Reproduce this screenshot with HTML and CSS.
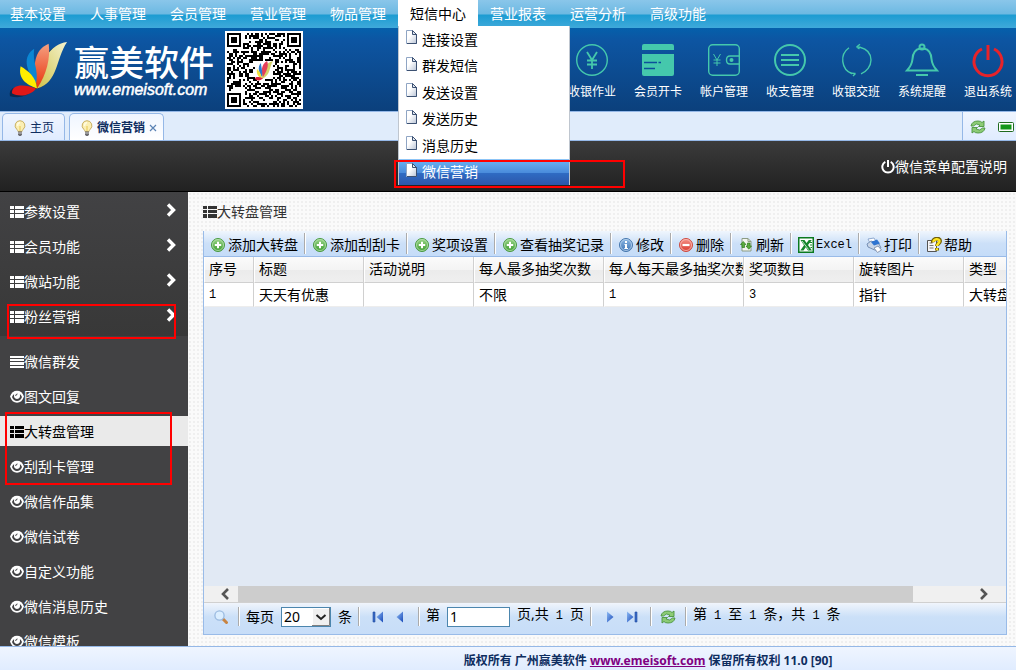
FILE: index.html
```html
<!DOCTYPE html>
<html lang="zh-CN">
<head>
<meta charset="utf-8">
<title>赢美软件</title>
<link rel="stylesheet" href="styles.css">
</head>
<body>
<svg class="defs" aria-hidden="true">
  <defs>
    <linearGradient id="gGreen" x1="0" y1="0" x2="0" y2="1"><stop offset="0" stop-color="#9ad588"/><stop offset="1" stop-color="#3c9c30"/></linearGradient>
    <linearGradient id="gBlue" x1="0" y1="0" x2="0" y2="1"><stop offset="0" stop-color="#8db8e4"/><stop offset="1" stop-color="#3e74b4"/></linearGradient>
    <linearGradient id="gRed" x1="0" y1="0" x2="0" y2="1"><stop offset="0" stop-color="#f6948a"/><stop offset="1" stop-color="#d8392e"/></linearGradient>
    <linearGradient id="gNav" x1="0" y1="0" x2="1" y2="1"><stop offset="0" stop-color="#8fbcf5"/><stop offset="1" stop-color="#1748b8"/></linearGradient>
    <linearGradient id="gPage" x1="0" y1="0" x2="1" y2="1"><stop offset="0.4" stop-color="#fff"/><stop offset="1" stop-color="#b9c4d6"/></linearGradient>
    <linearGradient id="gL1" x1="1" y1="0" x2="0" y2="1"><stop offset="0" stop-color="#f5f3cf"/><stop offset="1" stop-color="#cfc24a"/></linearGradient>
    <linearGradient id="gL2" x1="0" y1="0" x2="0" y2="1"><stop offset="0" stop-color="#f5a080"/><stop offset="1" stop-color="#e8320c"/></linearGradient>
  </defs>
  <symbol id="list" viewBox="0 0 14 14"><path d="M0 1h4v3H0zM5 1h9v3H5zM0 5h4v3H0zM5 5h9v3H5zM0 9h4v4H0zM5 9h9v4H5z" fill="currentColor"/></symbol>
  <symbol id="bars" viewBox="0 0 14 14"><path d="M0 1h14v2H0zM0 4h14v2H0zM0 7h14v3H0zM0 11h14v2H0z" fill="currentColor"/></symbol>
  <symbol id="eye" viewBox="0 0 14 14"><path d="M0 6.500Q2 .8 7 .8T14 6.500Q12 12.700 7 12.700T0 6.500z" fill="currentColor"/><path d="M2 7Q3 4.500 4.300 4Q3.400 8.800 7 9Q10.600 8.800 9.700 4Q11 4.500 12 7Q10.500 11 7 11T2 7z" fill="#424244"/><circle cx="7" cy="5.400" r="2.800" fill="currentColor"/><path d="M5.700 6q0-2 1.800-2" stroke="#424244" fill="none"/></symbol>
  <symbol id="chev" viewBox="0 0 10 14"><path d="M2 1.500L7.500 7L2 12.500" fill="none" stroke="currentColor" stroke-width="3.400"/></symbol>
  <symbol id="power" viewBox="0 0 14 14"><path d="M4.300 1.900A5.700 5.700 0 1 0 9.700 1.900M7 0v7" fill="none" stroke="currentColor" stroke-width="2"/></symbol>
  <symbol id="page" viewBox="0 0 11 14"><path d="M.5.5h6l4 4v9H.5z" fill="url(#gPage)" stroke="#8fa5c4"/><path d="M10.500 4v9.500H1" fill="none" stroke="#3c5172"/><path d="M6.500.5v4h4z" fill="#dfe6f0" stroke="#3c5172"/></symbol>
  <symbol id="bulb" viewBox="0 0 12 16"><path d="M6 .7a4.900 4.900 0 0 0-3.200 8.600q1 1 1.200 2.200h4q.2-1.200 1.200-2.200A4.900 4.900 0 0 0 6 .7z" fill="#fbefb4" stroke="#c9b064"/><path d="M3.500 6q0-3 2.500-3.500" stroke="#fffbe0" stroke-width="1.500" fill="none"/><path d="M6 6v5" stroke="#e8c74e"/><path d="M4 11.500h4v3L7 16H5l-1-1.500z" fill="#6c6c70"/><path d="M4 13h4" stroke="#c8c8c8"/></symbol>
  <symbol id="add" viewBox="0 0 16 16"><circle cx="8" cy="8" r="6.500" fill="url(#gGreen)" stroke="#4a9a42"/><circle cx="8" cy="8" r="5.500" fill="none" stroke="#b9e2b0" stroke-width=".8"/><path d="M8 4.800v6.400M4.800 8h6.400" stroke="#fff" stroke-width="2"/></symbol>
  <symbol id="info" viewBox="0 0 16 16"><circle cx="8" cy="8" r="6.500" fill="url(#gBlue)" stroke="#4577ad"/><circle cx="8" cy="8" r="5.500" fill="none" stroke="#bcd5ef" stroke-width=".8"/><path d="M7 4h2v2H7zM6.500 7H9v4h1v1H6.300v-1H7V8h-.5z" fill="#fff"/></symbol>
  <symbol id="del" viewBox="0 0 16 16"><circle cx="8" cy="8" r="6.500" fill="url(#gRed)" stroke="#cd4a40"/><circle cx="8" cy="8" r="5.500" fill="none" stroke="#fbc1bb" stroke-width=".8"/><path d="M4.500 8h7" stroke="#fff" stroke-width="2.200"/></symbol>
  <symbol id="reload" viewBox="0 0 16 16"><path d="M4 1.500h6l3 3v9.500H4z" fill="#f2f5ee" stroke="#8b9b83"/><path d="M10 1.500v3h3" fill="none" stroke="#8b9b83"/><path d="M4 10.500V7.500H2.500L5.200 4.500 8 7.500H6.500v3zM9.500 6H12v3h1.500l-2.700 3.200L8 9h1.500z" fill="#5bab3d" stroke="#2d7c1c" stroke-width=".7"/></symbol>
  <symbol id="xls" viewBox="0 0 16 16"><path d="M0 0h16v16H0z" fill="#0b7a20"/><path d="M1.500 1.500h13v13h-13z" fill="#fff"/><path d="M2.500 3h4l2 3 2.300-3h3L10 8l4 5.500h-4L7.700 10.200 5.500 13.500H2.300L6 8.300z" fill="#16862b"/><path d="M11 5.500h3M12 8h2M12.500 10.500H14" stroke="#16862b"/><path d="M4 4l6.500 8.500" stroke="#bfe3c6"/></symbol>
  <symbol id="print" viewBox="0 0 16 16"><path d="M2 2l6-1 3 5-6 2z" fill="#fff" stroke="#8fa9cf"/><path d="M1 7l4-3 8 3 2 4-4 3-9-4z" fill="#c9d6e8" stroke="#7690b5"/><path d="M5 5l6-2.500 3 4-6 2z" fill="#2f74d0"/><path d="M8 11l4-2 3.500 4-4 2.500z" fill="#fff" stroke="#8998b0"/></symbol>
  <symbol id="help" viewBox="0 0 16 16"><path d="M1.500 3.500h9v11h-9z" fill="#f6f6f8" stroke="#555"/><path d="M3.500 6h3M3.500 8.500h4M3.500 11h4" stroke="#777"/><path d="M7 5.500C6 1.500 14 0 14 4c0 2.500-3 2.600-3 5M11 11v2.500" stroke="#71600a" stroke-width="4" fill="none"/><path d="M7.500 5C7 2 13.500 1 13.500 4c0 2.300-2.600 2.800-2.600 5M10.900 11.200v2" stroke="#ffe51f" stroke-width="2.400" fill="none"/></symbol>
  <symbol id="recycle" viewBox="0 0 16 16"><path d="M1 7q1-5 7-5 3 0 4 1.500L14 2v5.500H8.500L10 6Q6 3.500 3.500 7z" fill="#8ccb75" stroke="#4b9440" stroke-width=".9"/><path d="M15 9q-1 5-7 5-3 0-4-1.500L2 14V8.500h5.500L6 10q4 2.500 6.500-1z" fill="#8ccb75" stroke="#4b9440" stroke-width=".9"/></symbol>
  <symbol id="search" viewBox="0 0 16 16"><path d="M10 10l3.500 3.500" stroke="#c88442" stroke-width="3" stroke-linecap="round"/><circle cx="6.500" cy="6.500" r="4.600" fill="#dbeeff" stroke="#9bbbe0" stroke-width="1.300"/></symbol>
  <symbol id="first" viewBox="0 0 16 16"><path d="M3 3h2v10H3z" fill="#3a6cc8" stroke="#1f4ba0" stroke-width=".6"/><path d="M13 2.500v11L6.500 8z" fill="url(#gNav)"/></symbol>
  <symbol id="prev" viewBox="0 0 16 16"><path d="M11 2.500v11L4.500 8z" fill="url(#gNav)"/></symbol>
  <symbol id="next" viewBox="0 0 16 16"><path d="M5 2.500v11L11.500 8z" fill="url(#gNav)"/></symbol>
  <symbol id="last" viewBox="0 0 16 16"><path d="M11 3h2v10h-2z" fill="#3a6cc8" stroke="#1f4ba0" stroke-width=".6"/><path d="M3 2.500v11L9.500 8z" fill="url(#gNav)"/></symbol>
</svg>

<nav class="menu">
  <a href="#">基本设置</a><a href="#">人事管理</a><a href="#">会员管理</a><a href="#">营业管理</a><a href="#">物品管理</a>
  <div class="menu-open">
    <a href="#" class="current">短信中心</a>
    <div class="dropdown">
      <a href="#"><svg><use href="#page"/></svg>连接设置</a>
      <a href="#"><svg><use href="#page"/></svg>群发短信</a>
      <a href="#"><svg><use href="#page"/></svg>发送设置</a>
      <a href="#"><svg><use href="#page"/></svg>发送历史</a>
      <a href="#"><svg><use href="#page"/></svg>消息历史</a>
      <a href="#" class="hot"><svg><use href="#page"/></svg>微信营销<span class="mark mark-menu"></span></a>
    </div>
  </div>
  <a href="#">营业报表</a><a href="#">运营分析</a><a href="#">高级功能</a>
</nav>

<header class="banner">
  <svg class="logo" viewBox="0 0 62 62">
    <g opacity=".4" transform="translate(-2 2)"><path d="M58 3C42 4 26 24 28 49C46 47 50 24 58 3z"/><path d="M3 56Q1 46 15 46L28 49Q18 60 3 56z"/></g>
    <path d="M60 2C43 4 29 24 29 50C51 44 48 20 60 2z" fill="url(#gL1)"/>
    <path d="M41 4C24 11 25 30 29 50C39 36 43 18 41 4z" fill="url(#gL2)"/>
    <path d="M26 9C14 17 17 30 28 45C31 30 24 24 26 9z" fill="#0b86d3"/>
    <path d="M12 27C9 40 18 46 29 50C28 38 20 32 12 27z" fill="#ffed00"/>
    <path d="M3 55C3 45 16 46 28 50C22 58 10 59 3 55z" fill="#e01818"/>
  </svg>
  <div class="brand"><strong>赢美软件</strong><em>www.emeisoft.com</em></div>
  <svg class="qr" id="qr" viewBox="0 0 39 39" shape-rendering="crispEdges"></svg>
  <div class="shortcuts">
    <a href="#"><svg viewBox="0 0 32 32"><circle cx="16" cy="16" r="15.300"/><path d="M11 8l5 8 5-8M16 16v9M11 16.500h10M11 20.500h10" stroke-width="1.800"/></svg>收银作业</a>
    <a href="#"><svg viewBox="0 0 32 32"><path d="M2 0h28q2 0 2 2v4H0V2q0-2 2-2zM0 10h32v20q0 2-2 2H2q-2 0-2-2z" class="solid"/><path d="M2 18.500h13M16.500 18.500h2.500M2 24.500h11" stroke="#0c4f9b"/></svg>会员开卡</a>
    <a href="#"><svg viewBox="0 0 32 32"><rect x=".7" y=".7" width="30.600" height="30.600" rx="4"/><path d="M5.500 10l3.500 6 3.500-6M9 16v6M5.500 16h7M5.500 19h7" stroke-width="1"/><path d="M31 12H22q-3.500 0-3.500 4t3.500 4h9" /><circle cx="23.500" cy="16" r="2" class="solid"/></svg>帐户管理</a>
    <a href="#"><svg viewBox="0 0 32 32"><circle cx="16" cy="16" r="15" stroke-width="2"/><path d="M7 11h18M7 16h18M7 21h18" stroke-width="2"/></svg>收支管理</a>
    <a href="#"><svg viewBox="0 0 32 32"><path d="M12 29.800A15 15 0 0 1 9 3.700M21 29.800A15 15 0 0 0 31 16Q31 6 20 3.200L16.500 3M16.500 3L20 .3M16.500 3l3 1.800M9 28.200q3 1.500 6.500 1.300M15.500 29.500L13 32"/></svg>收银交班</a>
    <a href="#"><svg viewBox="0 0 32 32"><path d="M1 26.500h30Q26 21 25.500 15Q25 6 18 4.500h-4Q7 6 6.500 15Q6 21 1 26.500z" stroke-width="2"/><circle cx="16" cy="3" r="2.500" stroke-width="2"/><path d="M10 31h12" stroke-width="2"/></svg>系统提醒</a>
    <a href="#" class="quit"><svg viewBox="0 0 32 32"><path d="M10 5A14 14 0 1 0 22 5M16 1v15" stroke-width="3"/></svg>退出系统</a>
  </div>
</header>

<div class="tabs">
  <a href="#" class="tab"><svg><use href="#bulb"/></svg>主页</a>
  <div class="tab active"><svg><use href="#bulb"/></svg>微信营销<button class="close" type="button" aria-label="关闭"><svg viewBox="0 0 8 8"><path d="M1 1l6 6M7 1L1 7" stroke="#5a82b4" stroke-width="1.200"/></svg></button></div>
  <div class="tab-tools">
    <button type="button" aria-label="刷新"><svg><use href="#recycle"/></svg></button>
    <button type="button" aria-label="全屏"><svg viewBox="0 0 16 16"><rect x=".5" y="3.500" width="15" height="9" rx="1" fill="#fff" stroke="#1f6a1f"/><path d="M2.500 5.500h11v5h-11z" fill="#12961a"/></svg></button>
  </div>
</div>

<div class="topbar"><a href="#"><svg><use href="#power"/></svg>微信菜单配置说明</a></div>

<main class="main">
  <aside class="side">
    <div class="groups">
      <a href="#"><svg><use href="#list"/></svg>参数设置<svg class="chev"><use href="#chev"/></svg></a>
      <a href="#"><svg><use href="#list"/></svg>会员功能<svg class="chev"><use href="#chev"/></svg></a>
      <a href="#"><svg><use href="#list"/></svg>微站功能<svg class="chev"><use href="#chev"/></svg></a>
      <a href="#"><svg><use href="#list"/></svg>粉丝营销<svg class="chev"><use href="#chev"/></svg><span class="mark mark-group"></span></a>
    </div>
    <div class="sub">
      <a href="#"><svg><use href="#bars"/></svg>微信群发</a>
      <a href="#"><svg><use href="#eye"/></svg>图文回复</a>
      <a href="#" class="selected"><svg><use href="#list"/></svg>大转盘管理<span class="mark mark-sub"></span></a>
      <a href="#"><svg><use href="#eye"/></svg>刮刮卡管理</a>
      <a href="#"><svg><use href="#eye"/></svg>微信作品集</a>
      <a href="#"><svg><use href="#eye"/></svg>微信试卷</a>
      <a href="#"><svg><use href="#eye"/></svg>自定义功能</a>
      <a href="#"><svg><use href="#eye"/></svg>微信消息历史</a>
      <a href="#"><svg><use href="#eye"/></svg>微信模板</a>
    </div>
  </aside>
  <section class="content">
    <h1><svg><use href="#list"/></svg>大转盘管理</h1>
    <div class="panel">
      <div class="toolbar">
        <button type="button"><svg><use href="#add"/></svg>添加大转盘</button>
        <button type="button"><svg><use href="#add"/></svg>添加刮刮卡</button>
        <button type="button"><svg><use href="#add"/></svg>奖项设置</button>
        <button type="button"><svg><use href="#add"/></svg>查看抽奖记录</button>
        <button type="button"><svg><use href="#info"/></svg>修改</button>
        <button type="button"><svg><use href="#del"/></svg>删除</button>
        <button type="button"><svg><use href="#reload"/></svg>刷新</button>
        <button type="button"><svg><use href="#xls"/></svg><span class="mono">Excel</span></button>
        <button type="button"><svg><use href="#print"/></svg>打印</button>
        <button type="button"><svg><use href="#help"/></svg>帮助</button>
      </div>
      <div class="grid">
        <table>
          <colgroup><col class="w50"><col class="w110"><col class="w110"><col class="w130"><col class="w140"><col class="w110"><col class="w110"><col class="w110"></colgroup>
          <thead><tr><th>序号</th><th>标题</th><th>活动说明</th><th>每人最多抽奖次数</th><th>每人每天最多抽奖次数</th><th>奖项数目</th><th>旋转图片</th><th>类型</th></tr></thead>
          <tbody><tr><td class="mono">1</td><td>天天有优惠</td><td></td><td>不限</td><td class="mono">1</td><td class="mono">3</td><td>指针</td><td>大转盘</td></tr></tbody>
        </table>
      </div>
      <div class="hscroll">
        <button type="button" aria-label="向左"><svg viewBox="0 0 10 12"><path d="M8 1L3 6l5 5" fill="none" stroke="#555" stroke-width="2.600"/></svg></button>
        <div class="track"><div class="thumb"></div></div>
        <button type="button" aria-label="向右"><svg viewBox="0 0 10 12"><path d="M2 1l5 5-5 5" fill="none" stroke="#555" stroke-width="2.600"/></svg></button>
      </div>
      <div class="pager">
        <div class="cell"><button type="button" aria-label="查找"><svg><use href="#search"/></svg></button></div>
        <div class="cell"><label for="size">每页</label><span class="pick"><select id="size"><option>20</option></select><svg viewBox="0 0 18 18"><path d="M0 0h18v18H0z" fill="#f0f0f0"/><path d="M.5 17.500V.5h17" stroke="#fff" fill="none"/><path d="M17.500 0v17.500H0" stroke="#808080" fill="none"/><path d="M4.500 7l4.500 4 4.500-4" stroke="#222" stroke-width="2" fill="none"/></svg></span><span>条</span></div>
        <div class="cell nav"><button type="button" aria-label="首页"><svg><use href="#first"/></svg></button><button type="button" aria-label="上一页"><svg><use href="#prev"/></svg></button></div>
        <div class="cell"><label for="pg" class="up">第</label><input id="pg" type="text" value="1"><span class="up">页,共<b>1</b>页</span></div>
        <div class="cell nav"><button type="button" aria-label="下一页"><svg><use href="#next"/></svg></button><button type="button" aria-label="末页"><svg><use href="#last"/></svg></button></div>
        <div class="cell again"><button type="button" aria-label="刷新"><svg><use href="#recycle"/></svg></button></div>
        <div class="cell"><span class="up">第<b>1</b>至<b>1</b>条，共<b>1</b>条</span></div>
      </div>
    </div>
  </section>
</main>

<footer class="foot">版权所有 广州赢美软件 <a href="#">www.emeisoft.com</a> 保留所有权利 11.0 [90]</footer>
<script src="qr.js"></script>
</body>
</html>
```
FILE: styles.css
```css
* { box-sizing: border-box; }
body {
  margin: 0; height: 100vh; overflow: hidden;
  display: flex; flex-direction: column;
  font: 14px/20px "Noto Sans", "Noto Sans CJK SC", sans-serif;
  color: #000;
}
a { color: inherit; text-decoration: none; }
button { font: inherit; color: inherit; background: none; border: 0; padding: 0; display: flex; align-items: center; }
svg { display: block; flex: none; }
.defs { position: absolute; width: 0; height: 0; }
.mono { font-family: "Liberation Mono", monospace; font-size: 12px; }
.mark { position: absolute; border: 2px solid #f00; z-index: 5; pointer-events: none; }

.menu {
  flex: none; height: 28px; display: flex; margin-left: -2px; color: #fff;
  background: linear-gradient(#8ac6ea 0, #6cb9e2 14px, #1c9cd2 15px, #3fa9da 28px);
}
.menu > a, .menu .current { display: block; width: 80px; height: 28px; line-height: 28px; text-align: center; }
.menu-open { position: relative; }
.menu .current { background: #fff; color: #000; height: 26px; }
.dropdown {
  position: absolute; left: 0; top: 26px; width: 172px; height: 159px; z-index: 4;
  display: grid; grid-auto-rows: 1fr; background: #fff; color: #000;
  border: solid #bfc6cf; border-width: 0 1px;
}
.dropdown a { position: relative; display: flex; align-items: center; gap: 5px; padding: 1px 0 0 7px; }
.dropdown svg { width: 11px; height: 14px; margin-bottom: 5px; }
.dropdown .hot { color: #fff; background: linear-gradient(#6db2f2, #4a8cdc 50%, #2f6cc4 51%, #2c56aa); border-top: 1px solid #8cc4f6; padding-top: 0; }
.mark-menu { left: -5px; top: 0; width: 231px; height: 28px; }

.banner { flex: none; height: 83px; display: flex; align-items: center; padding: 0 4px 0 9px; color: #fff; background: linear-gradient(#0560ab, #0d55a2 15%, #0b407c); }
.logo { width: 60px; height: 60px; }
.brand { display: flex; flex-direction: column; padding-left: 5px; width: 156px; }
.brand strong { font-size: 35px; line-height: 40px; font-weight: 500; font-family: "Noto Sans CJK SC", sans-serif; white-space: nowrap; }
.brand em { font: italic 16px/18px "Liberation Sans", sans-serif; -webkit-text-stroke: 0.5px #fff; }
.qr { width: 78px; height: 78px; background: #fff; }
.shortcuts { margin-left: auto; display: flex; gap: 18px; padding-top: 4px; font-size: 12px; line-height: 16px; }
.shortcuts a { width: 48px; display: flex; flex-direction: column; align-items: center; gap: 8px; white-space: nowrap; }
.shortcuts svg { width: 32px; height: 32px; fill: none; stroke: #45c8ac; stroke-width: 1.400; overflow: visible; }
.shortcuts .solid { fill: #45c8ac; stroke: none; }
.shortcuts .quit svg { stroke: #e8232a; }

.tabs { flex: none; height: 30px; display: flex; align-items: flex-end; gap: 4px; padding-left: 2px; background: #e0ecfb; border: solid #95b8e7; border-width: 1px 0; font-size: 12px; color: #0e2d5f; }
.tab { height: 27px; display: flex; align-items: center; gap: 4px; padding: 1px 10px 0 11px; border: 1px solid #95b8e7; border-bottom: 0; border-radius: 5px 5px 0 0; background: linear-gradient(#eff5ff, #e0ecff); }
.tab > svg { width: 12px; height: 16px; }
.tab.active { font-weight: bold; background: linear-gradient(#eff5ff, #fff); padding: 1px 6px 0 11px; }
.close svg { width: 8px; height: 8px; }
.tab-tools { margin-left: auto; align-self: stretch; display: flex; gap: 12px; align-items: center; padding: 2px 2px 0 7px; border-left: 1px solid #95b8e7; background: linear-gradient(#eff5ff, #e0ecff); }
.tab-tools svg { width: 16px; height: 16px; }

.topbar { flex: none; height: 51px; display: flex; align-items: center; justify-content: flex-end; padding: 2px 9px 0 0; background: linear-gradient(#3b3b3b, #212121); border-bottom: 1px solid #000; color: #fff; }
.topbar a { display: flex; align-items: center; }
.topbar svg { width: 14px; height: 14px; }

.main { flex: 1; min-height: 0; display: flex; }
.side { width: 188px; flex: none; overflow: hidden; color: #fff; background: #424244; }
.side a { position: relative; height: 30px; display: flex; align-items: center; padding: 2px 0 0 10px; }
.side a svg { width: 14px; height: 14px; }
.groups, .sub { display: flex; flex-direction: column; gap: 5px; }
.groups { padding: 4px 0 5px; background: linear-gradient(#424244, #383838); }
.groups a .chev { width: 10px; height: 14px; margin: 0 12px 4px auto; }
.sub { padding-top: 10px; }
.side .selected { background: #eaeaea; color: #000; }
.mark-group { left: 7px; top: 3px; width: 169px; height: 35px; }
.mark-sub { left: 5px; top: -4px; width: 167px; height: 73px; }

.content {
  flex: 1; min-width: 0; display: flex; flex-direction: column; padding: 10px 9px 11px 15px;
  background: radial-gradient(#efefef 1px, transparent 1px) 0 0 / 4px 4px #fafafa;
}
h1 { margin: 0 0 9px; font-size: 14px; line-height: 20px; font-weight: normal; color: #333; display: flex; align-items: center; }
h1 svg { width: 14px; height: 14px; }
.panel { flex: 1; min-height: 0; display: flex; flex-direction: column; border: 1px solid #99bbe8; border-top: 0; background: #e1e9f4; }
.toolbar { flex: none; height: 26px; display: flex; overflow: hidden; white-space: nowrap; background: linear-gradient(#f0f6fd, #cce0f8 50%, #c5dcf8); border-bottom: 1px solid #99bbe8; padding: 2px 0; }
.toolbar button { gap: 2px; padding: 2px 6px 0; border-right: 2px groove #fff; flex: none; }
.toolbar button:last-child { border: 0; }
.toolbar svg { width: 16px; height: 16px; }
.grid { flex: 1; min-height: 0; overflow: hidden; }
table { width: 870px; table-layout: fixed; border-collapse: separate; border-spacing: 0; }
th, td { padding: 0 0 0 4px; text-align: left; font-weight: normal; white-space: nowrap; overflow: hidden; border-right: 1px solid #d0d0d0; border-bottom: 1px solid #d0d0d0; border-left: 1px solid #fff; }
th { height: 26px; padding-bottom: 2px; background: linear-gradient(#fbfbfb, #f4f4f4 50%, #ebebeb 51%, #efefef); }
td { height: 24px; background: #fff; border-bottom: 1px solid #ededed; }
.w50 { width: 50px; } .w110 { width: 110px; } .w130 { width: 130px; } .w140 { width: 140px; }
.hscroll { flex: none; height: 17px; display: flex; background: #f0f0f0; border-bottom: 1px solid #d0d0d0; }
.hscroll button { width: 34px; padding-left: 16px; flex: none; }
.hscroll button + div + button { padding-left: 7px; }
.hscroll svg { width: 10px; height: 12px; }
.track { flex: 1; }
.thumb { width: 92%; height: 16px; background: #cdcdcd; }

.pager { flex: none; height: 31px; display: flex; align-items: flex-start; padding: 4px 0 0 3px; white-space: nowrap; background: linear-gradient(#f0f5fc, #cbe0f8 45%, #c7ddf8); }
.cell { height: 19px; display: flex; align-items: center; gap: 7px; padding: 0 6px; border-right: 2px groove #fff; }
.cell:last-child { border: 0; }
.cell:first-child { padding: 0 9px 0 6px; }
.cell svg { width: 16px; height: 16px; }
.cell.nav { gap: 6px; padding: 0 10px; }
.cell.again { padding: 0 9px 0 8px; }
.cell b { font: 12px/20px "Liberation Mono", monospace; margin: 0 7px; }
.up { padding-bottom: 4px; }
.pick { position: relative; display: flex; }
.pick svg { position: absolute; right: 1px; top: 1px; width: 18px; height: 18px; pointer-events: none; }
select, .pager input { height: 20px; border: 1px solid #4c86ae; border-radius: 0; background: #fff; font: 14px/18px "Noto Sans", sans-serif; padding: 0 2px; margin: 0; color: #000; }
select { width: 50px; appearance: none; }
.pager input { width: 63px; }

.foot { flex: none; height: 24px; padding: 4px 0 0 280px; text-align: center; font-size: 12px; font-weight: bold; color: #0e2d5f; white-space: nowrap; border-top: 1px solid #95b8e7; background: linear-gradient(#eff5ff, #e0ecff); }
.foot a { color: #800080; text-decoration: underline; }
```
FILE: qr.js
```js
// Draws a decorative 37-module code: three finders, data modules and a centre badge.
var size = 37, seed = 2463, cells = '';
function rnd() { seed = (seed * 16807) % 2147483647; return seed / 2147483647; }
function inBox(x, y, bx, by, w) { return x >= bx && x < bx + w && y >= by && y < by + w; }
for (var y = 0; y < size; y++) {
  for (var x = 0; x < size; x++) {
    var on = rnd() > 0.5;
    if (inBox(x, y, 0, 0, 8) || inBox(x, y, 29, 0, 8) || inBox(x, y, 0, 29, 8) || inBox(x, y, 14, 14, 9)) continue;
    if (on) cells += 'M' + (x + 1) + ' ' + (y + 1) + 'h1v1h-1z';
  }
}
function finder(x, y) {
  return '<path fill-rule="evenodd" d="M' + x + ' ' + y + 'h7v7h-7zM' + (x + 1) + ' ' + (y + 1) + 'v5h5v-5zM' + (x + 2) + ' ' + (y + 2) + 'h3v3h-3z"/>';
}
document.getElementById('qr').innerHTML =
  '<path d="' + cells + '"/>' + finder(1, 1) + finder(31, 1) + finder(1, 31) +
  '<g shape-rendering="auto"><path d="M24 15C20 16 18 20 18.500 24C23 22 22 18 24 15z" fill="#d5d36a"/>' +
  '<path d="M21 15C18 17 18 20 19 23C21 20 22 17 21 15z" fill="#e4405a"/>' +
  '<path d="M18 16C16 18 17 21 18.500 23C19 20 18 18 18 16z" fill="#2c7bd0"/>' +
  '<path d="M16 19C15.500 22 17 23 18.500 24C18 21 17 20 16 19z" fill="#f3e23a"/>' +
  '<path d="M15 24C15 22.500 17 23 19 23.500C18 25 16 25 15 24z" fill="#d4233a"/></g>';
```
